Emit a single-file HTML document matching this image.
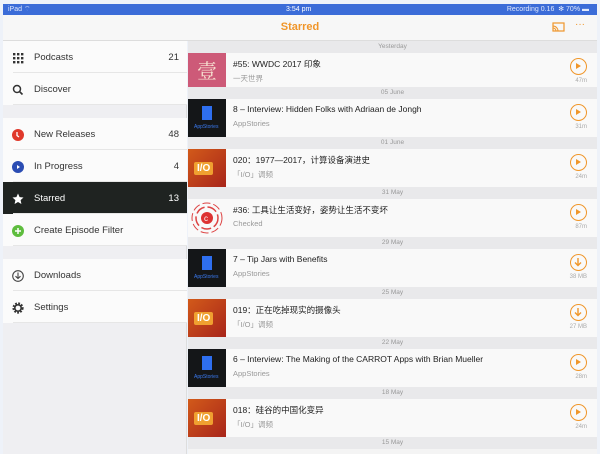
<!DOCTYPE html>
<html><head><meta charset="utf-8"><style>
*{margin:0;padding:0;box-sizing:border-box}
body{width:600px;height:454px;background:#eef2f9;font-family:"Liberation Sans","Noto Sans CJK SC",sans-serif;position:relative;overflow:hidden}
.sb{position:absolute;left:3px;top:4px;width:594px;height:11px;background:#3b6cd8;color:#dfe7fb;font-size:7px;line-height:11px}
.nav{position:absolute;left:3px;top:15px;width:594px;height:26px;background:#f7f7f7;border-bottom:1px solid #ddd}
.nav .t{position:absolute;left:0;right:0;text-align:center;top:6px;color:#f0962a;font-weight:bold;font-size:11px}
.side{position:absolute;left:3px;top:41px;width:184px;height:413px;background:#efeff2;border-right:1px solid #ddd}
.it{position:absolute;left:0;width:184px;height:32px;background:#fbfbfb;font-size:9.5px;color:#333;line-height:33px}
.it span.l{position:absolute;left:31px}
.it span.n{position:absolute;right:8px}
.it .ic{position:absolute;left:9px;top:11px;width:12px;height:12px}
.it:after{content:"";position:absolute;left:10px;right:0;bottom:0;height:1px;background:#e6e6e6}
.it.sel{background:#1f2321;color:#fff}
.main{position:absolute;left:188px;top:41px;width:409px;height:413px;background:#f4f4f4}
.dh{position:absolute;left:0;width:409px;height:12px;background:#e9e9eb;color:#999;font-size:6.5px;text-align:center;line-height:12px}
.row{position:absolute;left:0;width:409px;background:#f9f9f9}
.art{position:absolute;left:0;top:0;width:38px;height:100%}
.tt{position:absolute;left:45px;top:5px;font-size:8.5px;color:#222}
.st{position:absolute;left:45px;top:20px;font-size:7.5px;color:#999}
.pl{position:absolute;right:10px;top:5px;width:17px;height:17px;border:1.5px solid #f0962a;border-radius:50%}
.pl:after{content:"";position:absolute;left:5px;top:3.5px;border-left:5px solid #f0962a;border-top:3.5px solid transparent;border-bottom:3.5px solid transparent}
.dl{position:absolute;right:10px;top:5px;width:17px;height:17px;border:1.5px solid #f0962a;border-radius:50%}
.dur{position:absolute;right:10px;top:25px;font-size:6px;color:#aaa;width:20px;text-align:right}
.io{background:linear-gradient(135deg,#d25a1a,#a8251a)}
.io b{position:absolute;left:6px;top:13px;background:#f0a030;color:#fff;font-size:10px;padding:1px 3px;border-radius:2px}
.as{background:#141618}
.as i{position:absolute;left:14px;top:7px;width:10px;height:14px;background:#2e6ff0}
.as s{position:absolute;left:6px;top:25px;font-size:5px;color:#3a7af0;text-decoration:none}
</style></head><body>
<div class="sb"><span style="position:absolute;left:5px">iPad ︎⌔</span><span style="position:absolute;left:283px;color:#fff">3:54 pm</span><span style="position:absolute;right:8px">Recording 0.16 &nbsp;✻ 70% ▬</span></div>
<div class="nav"><div class="t">Starred</div>
<svg style="position:absolute;left:549px;top:7px" width="13" height="10"><rect x="1" y="1" width="11" height="8" fill="none" stroke="#f0962a" stroke-width="1.2"/><path d="M1 6a3 3 0 0 1 3 3M1 4a5 5 0 0 1 5 5" stroke="#f0962a" fill="none"/></svg>
<span style="position:absolute;left:572px;top:4px;color:#f0962a;font-size:10px">···</span></div>
<div class="side">
<div class="it" style="top:0"><svg class="ic" viewBox="0 0 12 12"><g fill="#333"><rect x="1" y="1" width="2.4" height="2.4"/><rect x="5" y="1" width="2.4" height="2.4"/><rect x="9" y="1" width="2.4" height="2.4"/><rect x="1" y="5" width="2.4" height="2.4"/><rect x="5" y="5" width="2.4" height="2.4"/><rect x="9" y="5" width="2.4" height="2.4"/><rect x="1" y="9" width="2.4" height="2.4"/><rect x="5" y="9" width="2.4" height="2.4"/><rect x="9" y="9" width="2.4" height="2.4"/></g></svg><span class="l">Podcasts</span><span class="n">21</span></div>
<div class="it" style="top:32px"><svg class="ic" viewBox="0 0 12 12"><circle cx="5" cy="5" r="3.5" fill="none" stroke="#333" stroke-width="1.5"/><path d="M7.5 7.5l3 3" stroke="#333" stroke-width="1.6"/></svg><span class="l">Discover</span></div>
<div class="it" style="top:77px"><svg class="ic" viewBox="0 0 12 12"><circle cx="6" cy="6" r="6" fill="#e0392b"/><path d="M5 3v3.5l2 1.5" stroke="#fff" stroke-width="1.3" fill="none"/></svg><span class="l">New Releases</span><span class="n">48</span></div>
<div class="it" style="top:109px"><svg class="ic" viewBox="0 0 12 12"><circle cx="6" cy="6" r="6" fill="#2b4db3"/><path d="M5 4l3 2-3 2z" fill="#fff"/></svg><span class="l">In Progress</span><span class="n">4</span></div>
<div class="it sel" style="top:141px"><svg class="ic" viewBox="0 0 12 12"><path d="M6 .5l1.6 3.6 3.9.4-2.9 2.6.8 3.9L6 9 2.6 11l.8-3.9L.5 4.5l3.9-.4z" fill="#fff"/></svg><span class="l">Starred</span><span class="n">13</span></div>
<div class="it" style="top:173px"><svg class="ic" viewBox="0 0 12 12"><circle cx="6" cy="6" r="6" fill="#5ebd3e"/><path d="M6 3v6M3 6h6" stroke="#fff" stroke-width="1.5"/></svg><span class="l">Create Episode Filter</span></div>
<div class="it" style="top:218px"><svg class="ic" viewBox="0 0 12 12"><circle cx="6" cy="6" r="5.3" fill="none" stroke="#444" stroke-width="1.1"/><path d="M6 2.5v6M3.5 6.2L6 8.5l2.5-2.3" stroke="#444" stroke-width="1.1" fill="none"/></svg><span class="l">Downloads</span></div>
<div class="it" style="top:250px"><svg class="ic" viewBox="0 0 12 12"><circle cx="6" cy="6" r="4.3" fill="none" stroke="#333" stroke-width="2.6" stroke-dasharray="1.7 1.2"/><circle cx="6" cy="6" r="3.2" fill="none" stroke="#333" stroke-width="1.6"/></svg><span class="l">Settings</span></div>
</div>
<div class="main">
<div class="dh" style="top:0">Yesterday</div>
<div class="row" style="top:12px;height:34px"><div class="art" style="background:#cd5a78;color:#f6e0d0;font-size:20px;text-align:center;line-height:34px;font-family:'Noto Serif CJK SC',serif">壹</div><div class="tt">#55: WWDC 2017 印象</div><div class="st">一天世界</div><div class="pl"></div><div class="dur">47m</div></div>
<div class="dh" style="top:46px">05 June</div>
<div class="row" style="top:58px;height:38px"><div class="art as"><i></i><s>AppStories</s></div><div class="tt">8 – Interview: Hidden Folks with Adriaan de Jongh</div><div class="st">AppStories</div><div class="pl"></div><div class="dur">31m</div></div>
<div class="dh" style="top:96px">01 June</div>
<div class="row" style="top:108px;height:38px"><div class="art io"><b>I/O</b></div><div class="tt">020：1977—2017，计算设备演进史</div><div class="st">「I/O」调频</div><div class="pl"></div><div class="dur">24m</div></div>
<div class="dh" style="top:146px">31 May</div>
<div class="row" style="top:158px;height:38px"><div class="art" style="background:#f9f9f9"><svg width="38" height="38"><circle cx="19" cy="19" r="15" fill="none" stroke="#d44" stroke-width="1" stroke-dasharray="8 3"/><circle cx="19" cy="19" r="11" fill="none" stroke="#d44" stroke-width="1.5" stroke-dasharray="10 3"/><circle cx="19" cy="19" r="6" fill="#d33"/><text x="16" y="22" font-size="8" fill="#fff" font-family="Liberation Sans">c</text></svg></div><div class="tt">#36: 工具让生活变好，姿势让生活不变坏</div><div class="st">Checked</div><div class="pl"></div><div class="dur">87m</div></div>
<div class="dh" style="top:196px">29 May</div>
<div class="row" style="top:208px;height:38px"><div class="art as"><i></i><s>AppStories</s></div><div class="tt">7 – Tip Jars with Benefits</div><div class="st">AppStories</div><div class="dl"><svg width="14" height="14" style="position:absolute;left:0;top:0"><path d="M7 3v7M4 7.5l3 3 3-3" stroke="#f0962a" stroke-width="1.4" fill="none"/></svg></div><div class="dur">38 MB</div></div>
<div class="dh" style="top:246px">25 May</div>
<div class="row" style="top:258px;height:38px"><div class="art io"><b>I/O</b></div><div class="tt">019：正在吃掉现实的摄像头</div><div class="st">「I/O」调频</div><div class="dl"><svg width="14" height="14" style="position:absolute;left:0;top:0"><path d="M7 3v7M4 7.5l3 3 3-3" stroke="#f0962a" stroke-width="1.4" fill="none"/></svg></div><div class="dur">27 MB</div></div>
<div class="dh" style="top:296px">22 May</div>
<div class="row" style="top:308px;height:38px"><div class="art as"><i></i><s>AppStories</s></div><div class="tt">6 – Interview: The Making of the CARROT Apps with Brian Mueller</div><div class="st">AppStories</div><div class="pl"></div><div class="dur">28m</div></div>
<div class="dh" style="top:346px">18 May</div>
<div class="row" style="top:358px;height:38px"><div class="art io"><b>I/O</b></div><div class="tt">018：硅谷的中国化变异</div><div class="st">「I/O」调频</div><div class="pl"></div><div class="dur">24m</div></div>
<div class="dh" style="top:396px">15 May</div>
</div>
</body></html>
